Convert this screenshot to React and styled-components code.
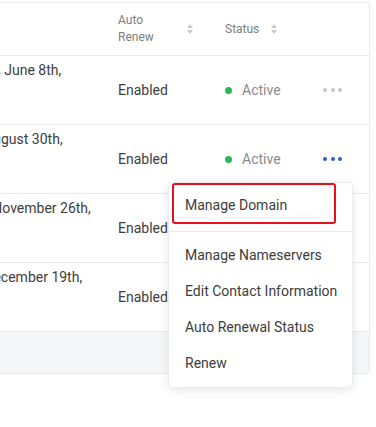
import React from "react";
import styled, { createGlobalStyle } from "styled-components";

const Global = createGlobalStyle`
  html, body { margin: 0; padding: 0; background: #ffffff; }
  body { font-family: Roboto, "Liberation Sans", Arial, sans-serif; overflow: hidden; }
  * { box-sizing: border-box; }
`;

const Page = styled.div`
  width: 376px;
  height: 427px;
  overflow: hidden;
  padding-top: 2px;
`;

const Table = styled.div`
  margin-left: -76px;
  width: 446px;
  border: 1px solid #e8e9ec;
  border-radius: 4px;
  background: #fff;
`;

const Row = styled.div`
  display: grid;
  grid-template-columns: 177px 107px 92px 1fr;
  align-items: center;
  height: ${(p) => (p.$header ? 53 : 69)}px;
  border-bottom: 1px solid #e8e9ec;
  font-size: 14px;
  color: #3d3d3d;
`;

const HeadCell = styled.div`
  display: flex;
  align-items: center;
  padding-left: 16px;
  font-size: 12px;
  line-height: 17px;
  color: #7d7d7d;
`;

const HeadLabel = styled.span`
  width: ${(p) => p.$w}px;
`;

const DateCell = styled.div`
  align-self: start;
  padding: 4px 0 0 16px;
  line-height: 20px;
  white-space: nowrap;
  overflow: hidden;
`;

const Cell = styled.div`
  padding-left: 16px;
  line-height: 20px;
`;

const Status = styled.div`
  display: flex;
  align-items: center;
  gap: 10px;
  padding-left: 16px;
  color: #8a8a8a;
  line-height: 20px;
`;

const Dot = styled.span`
  width: 7px;
  height: 7px;
  border-radius: 50%;
  background: #28b95f;
`;

const ActionCell = styled.div`
  position: relative;
  height: 100%;
  display: flex;
  align-items: center;
  padding-left: 22px;
`;

const Dots = styled.button`
  display: flex;
  gap: 3.5px;
  padding: 0;
  border: 0;
  background: none;
  cursor: pointer;
  span {
    width: 4px;
    height: 4px;
    border-radius: 50%;
    background: ${(p) => (p.$active ? "#2b5fd6" : "#c4c6ca")};
  }
`;

const Footer = styled.div`
  height: 41px;
  background: #f5f6f8;
  border-radius: 0 0 3px 3px;
`;

const Menu = styled.div`
  position: absolute;
  z-index: 5;
  left: -133px;
  top: 57px;
  width: 185px;
  background: #fff;
  border: 1px solid #ebecef;
  border-radius: 5px;
  box-shadow: 0 2px 8px rgba(0, 0, 0, 0.1);
  padding-bottom: 6px;
`;

const HighlightItem = styled.div`
  margin: 0 16px 0 3px;
  height: 41px;
  border: 2px solid #e5121b;
  border-radius: 3px;
  display: flex;
  align-items: center;
  padding: 2px 11px 0;
  font-size: 14px;
  color: #3d3d3d;
`;

const Divider = styled.div`
  margin-top: 7px;
  height: 1px;
  background: #ebecef;
`;

const List = styled.div`
  padding-top: 5px;
`;

const Item = styled.div`
  height: 36px;
  display: flex;
  align-items: center;
  padding-left: 16px;
  font-size: 14px;
  color: #3d3d3d;
  white-space: nowrap;
`;

const SortIcon = () => (
  <svg width="6" height="10" viewBox="0 0 6 10">
    <path d="M3 0 L6 4 L0 4 Z" fill="#c8cacd" />
    <path d="M0 6 L6 6 L3 10 Z" fill="#c8cacd" />
  </svg>
);

const rows = [
  { date: "Thursday, June 8th,", menu: false },
  { date: "Friday, August 30th,", menu: true },
  { date: "Sunday, November 26th,", menu: false },
  { date: "Friday, December 19th,", menu: false },
];

export default function App() {
  return (
    <>
      <Global />
      <Page>
        <Table>
          <Row $header>
            <HeadCell />
            <HeadCell>
              <HeadLabel $w={69}>
                Auto
                <br />
                Renew
              </HeadLabel>
              <SortIcon />
            </HeadCell>
            <HeadCell>
              <HeadLabel $w={46}>Status</HeadLabel>
              <SortIcon />
            </HeadCell>
            <HeadCell />
          </Row>
          {rows.map((r, i) => (
            <Row key={i}>
              <DateCell>{r.date}</DateCell>
              <Cell>Enabled</Cell>
              {i < 2 ? (
                <Status>
                  <Dot />
                  Active
                </Status>
              ) : (
                <Cell />
              )}
              <ActionCell>
                {i < 2 && (
                  <Dots $active={r.menu} aria-label="Actions">
                    <span />
                    <span />
                    <span />
                  </Dots>
                )}
                {r.menu && (
                  <Menu>
                    <HighlightItem>Manage Domain</HighlightItem>
                    <Divider />
                    <List>
                      <Item>Manage Nameservers</Item>
                      <Item>Edit Contact Information</Item>
                      <Item>Auto Renewal Status</Item>
                      <Item>Renew</Item>
                    </List>
                  </Menu>
                )}
              </ActionCell>
            </Row>
          ))}
          <Footer />
        </Table>
      </Page>
    </>
  );
}
